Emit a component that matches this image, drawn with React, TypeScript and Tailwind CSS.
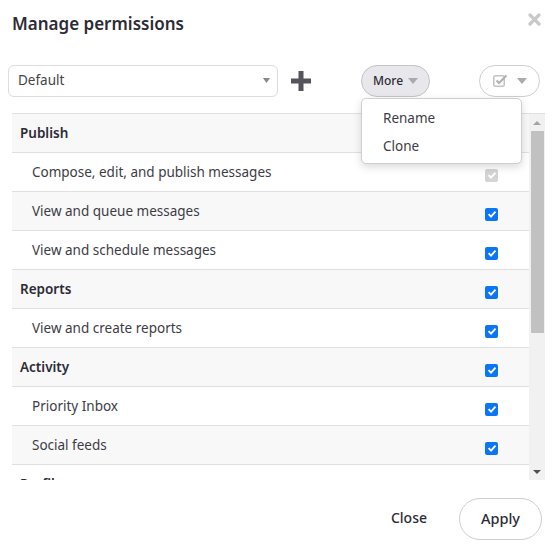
import React from "react";

const Check = ({ disabled }: { disabled?: boolean }) => (
  <div
    className={
      "w-[13px] h-[13px] mt-[6px] rounded-[2px] flex items-center justify-center " +
      (disabled ? "bg-[#d4d4d4]" : "bg-[#0a75f5]")
    }
  >
    <svg width="10" height="10" viewBox="0 0 10 10">
      <path d="M1.6 5.2 L4 7.6 L8.5 2.6" fill="none" stroke="#fff" strokeWidth="1.9" />
    </svg>
  </div>
);

const rows: { label: string; header?: boolean; disabled?: boolean; check?: boolean }[] = [
  { label: "Publish", header: true, check: false },
  { label: "Compose, edit, and publish messages", check: true, disabled: true },
  { label: "View and queue messages", check: true },
  { label: "View and schedule messages", check: true },
  { label: "Reports", header: true, check: true },
  { label: "View and create reports", check: true },
  { label: "Activity", header: true, check: true },
  { label: "Priority Inbox", check: true },
  { label: "Social feeds", check: true },
  { label: "Profiles", header: true, check: false },
];

export default function App() {
  return (
    <div
      className="relative w-[555px] h-[552px] bg-white text-[#2c2b36] overflow-hidden"
      style={{ fontFamily: '"Noto Sans", "Open Sans", sans-serif' }}
    >
      {/* header */}
      <div className="flex items-center justify-between pl-[12px] pr-[14px] pt-[0px] h-[46px]">
        <h1 className="text-[17px] font-semibold leading-none">Manage permissions</h1>
        <svg width="13" height="13" viewBox="0 0 13 13" className="mt-[-7px]">
          <path d="M2 2 L11 11 M11 2 L2 11" stroke="#c9c9c9" strokeWidth="3.2" strokeLinecap="round" />
        </svg>
      </div>

      {/* toolbar */}
      <div className="flex items-center pl-[8px] pt-[18px] h-[51px]">
        <div className="w-[270px] h-[32px] border border-[#dcdcdc] rounded-[6px] flex items-center justify-between pl-[9px] pr-[7px]">
          <span className="text-[13.5px] text-[#444]">Default</span>
          <svg width="7" height="5" viewBox="0 0 7 5">
            <path d="M0 0 H7 L3.5 5 Z" fill="#888" />
          </svg>
        </div>
        <svg width="20" height="20" viewBox="0 0 20 20" className="ml-[13px]">
          <path d="M7.5 0 H12.5 V7.5 H20 V12.5 H12.5 V20 H7.5 V12.5 H0 V7.5 H7.5 Z" fill="#55545c" />
        </svg>
        <div className="ml-[50px] w-[69px] h-[32px] rounded-full bg-[#e8e8ec] border border-[#c4c4c8] flex items-center justify-center gap-[5px]">
          <span className="text-[12px] font-medium text-[#2c2b36]">More</span>
          <svg width="10" height="6" viewBox="0 0 10 6">
            <path d="M0 0 H10 L5 6 Z" fill="#a9a9ae" />
          </svg>
        </div>
        <div className="ml-[49px] w-[61px] h-[32px] rounded-full bg-white border border-[#cfcfd3] flex items-center justify-center gap-[9px]">
          <svg width="15" height="13" viewBox="0 0 15 13">
            <rect x="0.75" y="1.75" width="10.5" height="10.5" rx="1.5" fill="none" stroke="#c3c3c7" strokeWidth="1.5" />
            <path d="M3.5 6.5 L6 9 L13.5 1.5" fill="none" stroke="#b0b0b4" strokeWidth="2" />
          </svg>
          <svg width="10" height="6" viewBox="0 0 10 6">
            <path d="M0 0 H10 L5 6 Z" fill="#a9a9ae" />
          </svg>
        </div>
      </div>

      {/* table */}
      <div className="flex ml-[12px] mr-[10px] mt-[16px] h-[367px] border-t border-[#e0e0e0]">
        <div className="flex-1 overflow-hidden">
          {rows.map((r, i) => (
            <div
              key={i}
              className={
                "h-[39px] flex items-center justify-between border-b border-[#e0e0e0] pr-[31px] " +
                (i % 2 === 0 ? "bg-[#f8f8f8] " : "bg-white ") +
                (r.header ? "pl-[8px]" : "pl-[20px]")
              }
            >
              <span
                className={
                  r.header
                    ? "text-[13.5px] font-semibold text-[#2c2b36]"
                    : "text-[13.5px] text-[#3d3c45]"
                }
              >
                {r.label}
              </span>
              {r.check ? <Check disabled={r.disabled} /> : <span />}
            </div>
          ))}
        </div>
        <div className="w-[16px] bg-[#f1f1f1] flex flex-col items-center">
          <div className="h-[17px] flex items-center justify-center">
            <svg width="8" height="4" viewBox="0 0 8 4">
              <path d="M0 4 H8 L4 0 Z" fill="#a3a3a3" />
            </svg>
          </div>
          <div className="w-[13px] h-[202px] bg-[#c1c1c1]" />
          <div className="flex-1" />
          <div className="h-[17px] flex items-center justify-center">
            <svg width="8" height="4" viewBox="0 0 8 4">
              <path d="M0 0 H8 L4 4 Z" fill="#505050" />
            </svg>
          </div>
        </div>
      </div>

      {/* footer */}
      <div className="flex items-center justify-end pr-[13px] pt-[18px] gap-[32px]">
        <span className="text-[14px] font-medium text-[#2c2b36] mt-[-3px]">Close</span>
        <div className="w-[83px] h-[42px] rounded-full border border-[#cfcfd3] flex items-center justify-center">
          <span className="text-[14.5px] font-medium text-[#2c2b36] mt-[-1px]">Apply</span>
        </div>
      </div>

      {/* dropdown menu */}
      <div className="absolute left-[361px] top-[98px] w-[161px] h-[66px] bg-white border border-[#cfcfcf] rounded-[5px] shadow-[0_3px_8px_rgba(0,0,0,0.15)] flex flex-col justify-center pl-[21px] pt-[2px] gap-[8px]">
        <span className="text-[13.5px] text-[#3d3c45] leading-[20px]">Rename</span>
        <span className="text-[13.5px] text-[#3d3c45] leading-[20px]">Clone</span>
      </div>
    </div>
  );
}
